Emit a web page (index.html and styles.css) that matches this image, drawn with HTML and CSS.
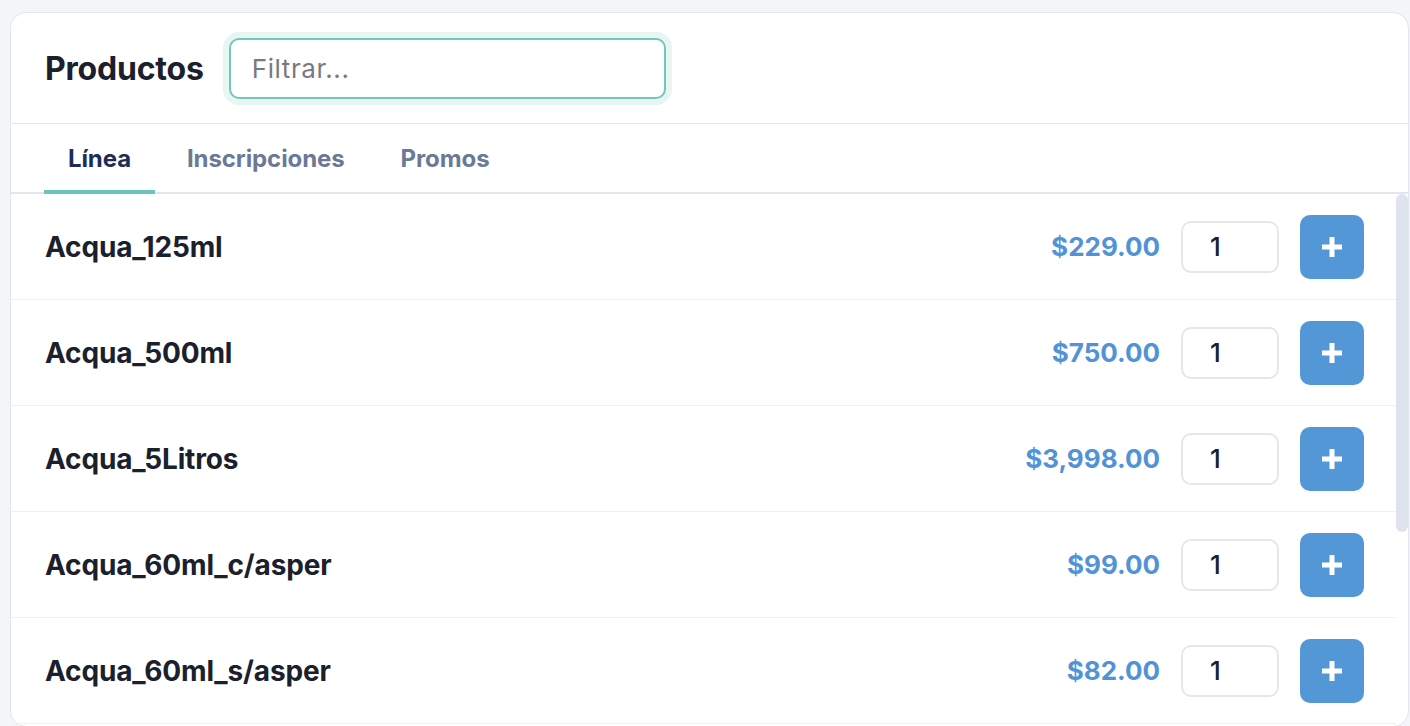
FILE: index.html
```html
<!DOCTYPE html>
<html lang="es">
<head>
<meta charset="utf-8">
<title>Productos</title>
<link rel="stylesheet" href="styles.css">
</head>
<body>
<div class="card">
  <header class="card-header">
    <h1 class="title">Productos</h1>
    <input class="filter" type="text" placeholder="Filtrar...">
  </header>
  <nav class="tabs">
    <a class="tab active">Línea</a>
    <a class="tab">Inscripciones</a>
    <a class="tab">Promos</a>
  </nav>
  <div class="list-wrap">
    <div class="list">
      <div class="row">
        <span class="name">Acqua_125ml</span>
        <span class="price">$229.00</span>
        <input class="qty" type="text" value="1">
        <button class="add"><svg viewBox="0 0 20 20" width="20" height="20"><path d="M10 0v20M0 10h20" stroke="#fff" stroke-width="5"/></svg></button>
      </div>
      <div class="row">
        <span class="name">Acqua_500ml</span>
        <span class="price">$750.00</span>
        <input class="qty" type="text" value="1">
        <button class="add"><svg viewBox="0 0 20 20" width="20" height="20"><path d="M10 0v20M0 10h20" stroke="#fff" stroke-width="5"/></svg></button>
      </div>
      <div class="row">
        <span class="name">Acqua_5Litros</span>
        <span class="price">$3,998.00</span>
        <input class="qty" type="text" value="1">
        <button class="add"><svg viewBox="0 0 20 20" width="20" height="20"><path d="M10 0v20M0 10h20" stroke="#fff" stroke-width="5"/></svg></button>
      </div>
      <div class="row">
        <span class="name">Acqua_60ml_c/asper</span>
        <span class="price">$99.00</span>
        <input class="qty" type="text" value="1">
        <button class="add"><svg viewBox="0 0 20 20" width="20" height="20"><path d="M10 0v20M0 10h20" stroke="#fff" stroke-width="5"/></svg></button>
      </div>
      <div class="row">
        <span class="name">Acqua_60ml_s/asper</span>
        <span class="price">$82.00</span>
        <input class="qty" type="text" value="1">
        <button class="add"><svg viewBox="0 0 20 20" width="20" height="20"><path d="M10 0v20M0 10h20" stroke="#fff" stroke-width="5"/></svg></button>
      </div>
    </div>
    <div class="scrollbar"><div class="thumb"></div></div>
  </div>
</div>
</body>
</html>
```

FILE: styles.css
```css
* { box-sizing: border-box; }
html, body { height: 100%; }
body {
  margin: 0;
  background: #f4f5f9;
  font-family: Inter, "Noto Sans", "Liberation Sans", sans-serif;
  overflow: hidden;
}
.card {
  margin: 12px 1px 0 10px;
  height: calc(100vh - 11px);
  background: #fff;
  border: 1px solid #e1e5ee;
  border-radius: 16px;
  display: flex;
  flex-direction: column;
  overflow: hidden;
}
.card-header {
  height: 111px;
  flex: none;
  display: flex;
  align-items: center;
  padding: 0 34px;
  gap: 25px;
  border-bottom: 1px solid #e2e6ef;
}
.title {
  margin: 0;
  font-size: 32px;
  font-weight: 700;
  color: #1a202c;
  letter-spacing: -0.2px;
}
.filter {
  width: 437px;
  height: 61px;
  border: 2px solid #72c7bb;
  border-radius: 10px;
  box-shadow: 0 0 0 6px #e7f5f3;
  padding: 0 21px;
  font-family: inherit;
  font-size: 26px;
  letter-spacing: 0.6px;
  color: #1a202c;
  outline: none;
  margin-top: 1px;
}
.filter::placeholder { color: #777a80; }
.tabs {
  flex: none;
  height: 70px;
  display: flex;
  gap: 8px;
  padding-left: 33px;
  border-bottom: 2px solid #e2e6ef;
}
.tab {
  position: relative;
  display: flex;
  align-items: center;
  padding: 0 24px 0;
  font-size: 24px;
  font-weight: 700;
  letter-spacing: -0.1px;
  color: #6b7898;
}
.tab.active { color: #1e2d55; }
.tab.active::after {
  content: "";
  position: absolute;
  left: 0;
  right: 0;
  bottom: -2px;
  height: 4px;
  background: #6cc5b9;
}
.list-wrap {
  flex: 1;
  min-height: 0;
  display: flex;
}
.list {
  flex: 1;
  min-width: 0;
  overflow: hidden;
}
.scrollbar {
  flex: none;
  width: 12px;
}
.thumb {
  height: 338px;
  background: #dfe3ed;
  border-radius: 6px;
}
.row {
  height: 106px;
  display: flex;
  align-items: center;
  padding: 0 32px 0 34px;
  border-bottom: 1px solid #edf0f5;
}
.name {
  flex: 1;
  font-size: 28px;
  font-weight: 700;
  letter-spacing: -0.15px;
  color: #1a202c;
}
.price {
  font-size: 26px;
  font-weight: 700;
  color: #5193d6;
  margin-right: 21px;
}
.qty {
  width: 98px;
  height: 52px;
  border: 2px solid #e2e7f0;
  border-radius: 10px;
  padding: 0 0 0 27px;
  font-family: inherit;
  font-size: 26px;
  font-weight: 500;
  color: #1a202c;
  outline: none;
  margin-right: 21px;
}
.add {
  width: 64px;
  height: 64px;
  border: none;
  border-radius: 10px;
  background: #5497d6;
  display: flex;
  align-items: center;
  justify-content: center;
  padding: 0;
}
```
